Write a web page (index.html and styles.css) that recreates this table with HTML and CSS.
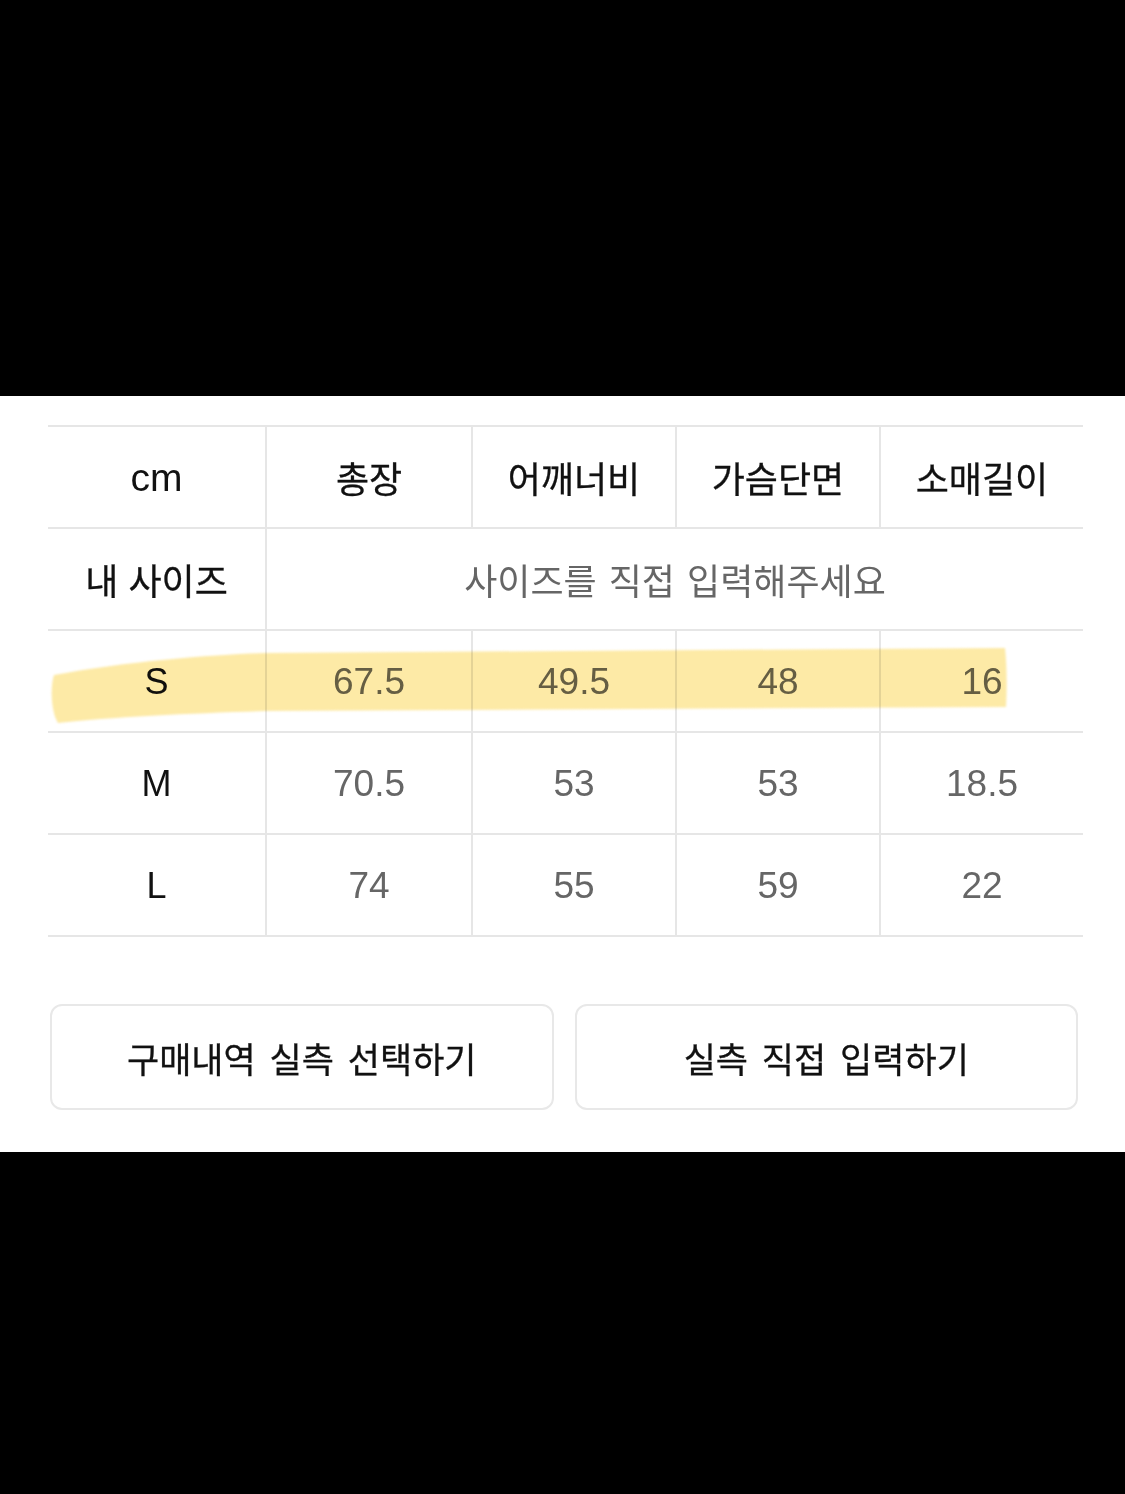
FILE: index.html
```html
<!DOCTYPE html>
<html lang="ko">
<head>
<meta charset="utf-8">
<title>사이즈</title>
<link rel="stylesheet" href="styles.css">
</head>
<body>
<div class="top-space"></div>
<section class="panel">
  <div class="table-wrap">
    <div class="size-table">
      <div class="row head">
        <div class="cell unit">cm</div>
        <div class="cell ko">총장</div>
        <div class="cell ko">어깨너비</div>
        <div class="cell ko">가슴단면</div>
        <div class="cell ko">소매길이</div>
      </div>
      <div class="row mine">
        <div class="cell ko">내 사이즈</div>
        <div class="cell span4 hint">사이즈를 직접 입력해주세요</div>
      </div>
      <div class="row">
        <div class="cell label">S</div>
        <div class="cell num">67.5</div>
        <div class="cell num">49.5</div>
        <div class="cell num">48</div>
        <div class="cell num">16</div>
      </div>
      <div class="row">
        <div class="cell label">M</div>
        <div class="cell num">70.5</div>
        <div class="cell num">53</div>
        <div class="cell num">53</div>
        <div class="cell num">18.5</div>
      </div>
      <div class="row last">
        <div class="cell label">L</div>
        <div class="cell num">74</div>
        <div class="cell num">55</div>
        <div class="cell num">59</div>
        <div class="cell num">22</div>
      </div>
    </div>
    <svg class="marker" viewBox="0 0 1035 512" width="1035" height="512" aria-hidden="true">
      <path d="M6 250 C 80 236, 170 229, 217 228 L 957 223 C 959 240, 959 265, 958 282 L 217 286 C 150 288, 60 292, 10 298 C 3 287, 2 262, 6 250 Z" fill="#fdeaa6"/>
    </svg>
  </div>
  <div class="buttons">
    <button class="btn">구매내역 실측 선택하기</button>
    <button class="btn">실측 직접 입력하기</button>
  </div>
</section>
</body>
</html>
```

FILE: styles.css
```css
html, body {
  margin: 0;
  padding: 0;
  background: #000;
}

body {
  width: 1125px;
  height: 1494px;
  font-family: "Liberation Sans", "Noto Sans CJK KR", sans-serif;
}

.top-space {
  height: 396px;
}

.panel {
  background: #fff;
  height: 756px;
  box-sizing: border-box;
  padding: 29px 42px 0 48px;
}

.table-wrap {
  position: relative;
  width: 1035px;
}

.size-table {
  display: flex;
  flex-direction: column;
}

.row {
  display: grid;
  grid-template-columns: 217px 206px 204px 204px 204px;
  height: 102px;
  box-sizing: border-box;
  border-top: 2px solid #e6e6e6;
}

.row.last {
  height: 104px;
  border-bottom: 2px solid #e6e6e6;
}

.cell {
  display: flex;
  align-items: center;
  justify-content: center;
  font-size: 33px;
  color: #111;
  border-left: 2px solid #e6e6e6;
}

.cell:first-child {
  border-left: none;
}

.span4 {
  grid-column: 2 / span 4;
}

.ko {
  font-family: "Noto Sans CJK KR", sans-serif;
  font-size: 36px;
  font-weight: 400;
  color: #111;
  -webkit-text-stroke: 0.3px #111;
}

.unit {
  font-size: 39px;
  padding-top: 2px;
}

.hint {
  font-family: "Noto Sans CJK KR", sans-serif;
  font-size: 36px;
  color: #666;
  word-spacing: 2px;
}

.num {
  color: #666;
  font-size: 37px;
  padding-top: 2px;
}

.label {
  font-size: 36px;
  padding-top: 2px;
}

.marker {
  position: absolute;
  left: 0;
  top: 0;
  mix-blend-mode: multiply;
  pointer-events: none;
  filter: blur(0.8px);
}

.buttons {
  display: flex;
  gap: 21px;
  margin-top: 67px;
  padding-left: 2px;
  width: 1028px;
}

.btn {
  flex: 1;
  height: 106px;
  background: #fff;
  border: 2px solid #e8e8e8;
  border-radius: 12px;
  font-family: "Noto Sans CJK KR", sans-serif;
  font-size: 35px;
  font-weight: 400;
  color: #111;
  padding: 0;
  word-spacing: 4px;
  -webkit-text-stroke: 0.3px #111;
}
```
